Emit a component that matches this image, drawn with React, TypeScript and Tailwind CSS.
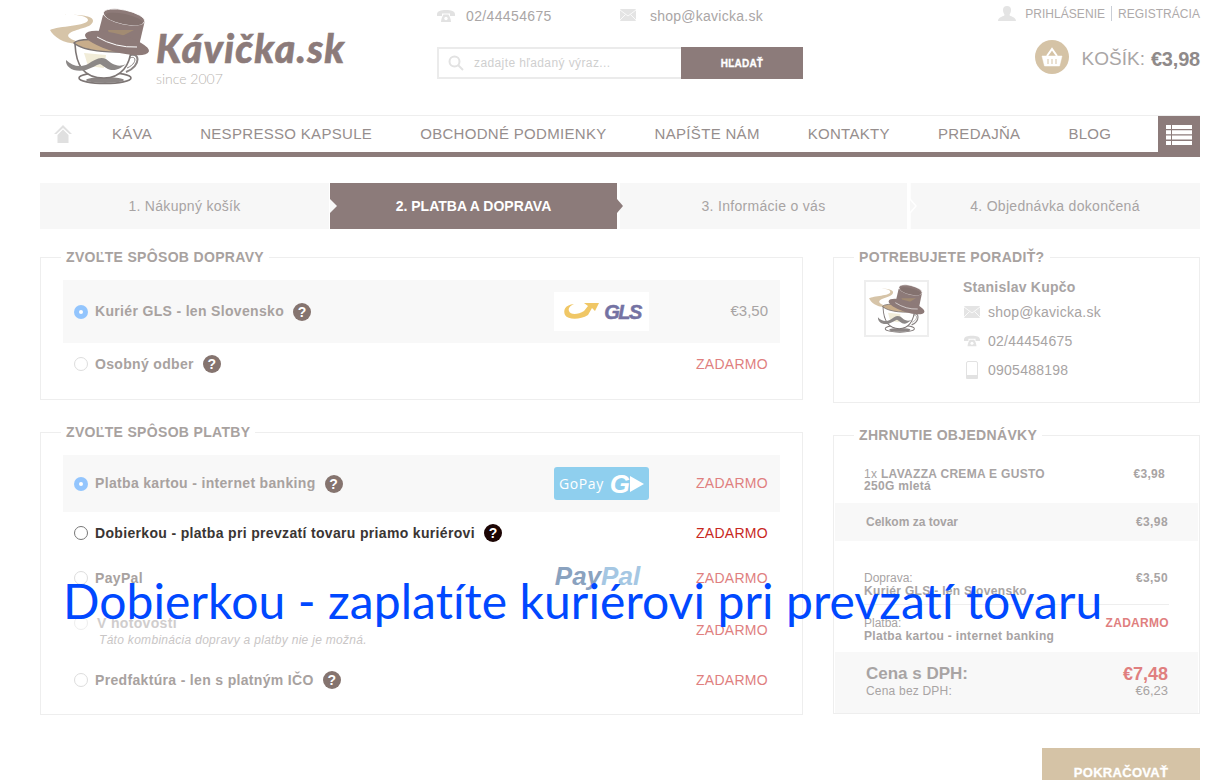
import React from "react";

const sans = "font-['Liberation_Sans',Arial,sans-serif]";

const HatCup: React.FC<{ className?: string; stretch?: boolean }> = ({ className, stretch }) => (
  <svg viewBox="0 0 100 82" className={className} preserveAspectRatio={stretch ? "none" : undefined}>
    {/* steam */}
    <path d="M13 9C22 8 38 9 38 14C38 20 8 20 0 24C4 32 18 40 33 37C24 35 14 31 20 27C28 22 42 22 43 15C44 9 24 8 13 9Z" fill="#d6c4a8" />
    {/* saucer */}
    <ellipse cx="55" cy="72" rx="26" ry="5.5" fill="#fff" stroke="#7d7675" strokeWidth="1.6" />
    <ellipse cx="55" cy="74" rx="19" ry="3" fill="#8b8584" />
    {/* handle */}
    <path d="M78 50C90 44 92 60 76 66" fill="none" stroke="#8b8584" strokeWidth="2" />
    <path d="M80 52C87 49 87 58 77 62" fill="none" stroke="#8b8584" strokeWidth="1" />
    {/* cup */}
    <path d="M25 38C26 60 34 72 54 72C72 72 80 58 81 44Z" fill="#fff" stroke="#7d7675" strokeWidth="1.6" />
    <path d="M24 37C30 30 72 34 82 44C70 48 34 46 24 37Z" fill="#c8ad8b" stroke="#7d7675" strokeWidth="1.4" />
    <path d="M34 47L56 49L54 62L38 60Z" fill="#f1ecd8" />
    {/* moustache */}
    <path d="M16 54C15 61 24 67 36 64C42 62 46 59 50 58C56 61 62 70 76 58C68 62 62 58 56 53C50 50 44 54 38 58C30 62 22 60 16 54Z" fill="#8c8887" />
    {/* hat */}
    <path d="M53 9L47 32L88 44L95 14Z" fill="#8d7a78" />
    <path d="M58 24L84 24L72 30L60 30Z" fill="#a28b72" />
    <ellipse cx="67" cy="37" rx="33" ry="9" transform="rotate(15 67 37)" fill="#8d7a78" />
    <path d="M47 31Q66 42 87 41" fill="none" stroke="#fff" strokeWidth="1" />
    <ellipse cx="74" cy="11" rx="21" ry="7" transform="rotate(12 74 11)" fill="#8d7a78" stroke="#fff" strokeWidth="0.8" />
    <ellipse cx="74" cy="13" rx="19" ry="5" transform="rotate(12 74 13)" fill="#84726f" />
  </svg>
);

const PhoneIcon: React.FC<{ className?: string }> = ({ className }) => (
  <svg viewBox="0 0 18 12" className={className} fill="#e2e2e2">
    <path d="M0 4.5C0 1 4 0 9 0s9 1 9 4.5V6h-5V3.5H5V6H0Z" />
    <path d="M4 12c0-3 1.500-6 2.500-7.500h5C12.500 6 14 9 14 12Z" />
    <circle cx="9" cy="8.500" r="1.700" fill="#fff" />
  </svg>
);

const MailIcon: React.FC<{ className?: string }> = ({ className }) => (
  <svg viewBox="0 0 16 12" className={className}>
    <rect width="16" height="12" rx="1" fill="#e4e4e4" />
    <path d="M0 1l8 6 8-6M0 11l5.500-5.500M16 11l-5.500-5.500" fill="none" stroke="#fff" strokeWidth="0.8" />
  </svg>
);

const Radio: React.FC<{ state?: "on" | "dark" | "off" | "faint" }> = ({ state = "off" }) => {
  if (state === "on") {
    return (
      <span className="flex h-[14px] w-[14px] shrink-0 items-center justify-center rounded-full bg-[#93c5fd]">
        <span className="h-1 w-1 rounded-full bg-white" />
      </span>
    );
  }
  const border =
    state === "dark" ? "border-[#777]" : state === "faint" ? "-mt-[15px] border-[#eee]" : "border-[#ddd]";
  return <span className={`h-[14px] w-[14px] shrink-0 rounded-full border bg-white ${border}`} />;
};

const Help: React.FC<{ dark?: boolean }> = ({ dark }) => (
  <span
    className={`ml-[9px] flex h-[18px] w-[18px] shrink-0 items-center justify-center rounded-full text-[14px] font-bold leading-none text-white ${
      dark ? "bg-[#1c0504]" : "bg-[#85746f]"
    }`}
  >
    ?
  </span>
);

const GlsLogo = () => (
  <div className="flex h-[39px] w-[95px] items-center justify-center bg-white">
    <svg viewBox="0 0 42 20" className="h-[20px] w-[42px]">
      <path d="M12 2C3 3 1 8 3 13C6 18 18 18 26 13L30 6L33 9L37 1L22 1L26 4L22 9C16 13 8 13 7 9C6 6 8 4 12 2Z" fill="#f0c766" />
    </svg>
    <span className="text-[20px] font-bold italic leading-none tracking-[-1.6px] text-[#7472a3] [-webkit-text-stroke:0.5px_#7472a3]">GLS</span>
  </div>
);

const GoPayLogo = () => (
  <div className="flex h-[33px] w-[95px] items-center rounded-[3px] bg-[#8fcfee] pl-[5px] text-white">
    <span className="font-['Open_Sans',sans-serif] text-[14px] leading-none tracking-[0.6px]">GoPay</span>
    <span className="ml-[6px] text-[26px] font-bold italic leading-none">G</span>
    <span className="h-0 w-0 border-y-[8px] border-l-[14px] border-y-transparent border-l-white" />
  </div>
);

const PayPalLogo = () => (
  <div className="-mt-1 whitespace-nowrap pr-2 text-[26px] font-bold italic leading-none">
    <span className="text-[#8aa2bf]">Pay</span>
    <span className="text-[#a5c7e3]">Pal</span>
  </div>
);

type Row = {
  label: string;
  note?: string;
  radio?: "on" | "dark" | "off" | "faint";
  help?: boolean;
  logo?: React.ReactNode;
  price: string;
  height: string;
  tone?: "selected" | "hover" | "muted" | "disabled";
};

const shipping: Row[] = [
  { label: "Kuriér GLS - len Slovensko", radio: "on", help: true, logo: <GlsLogo />, price: "€3,50", height: "h-[63px]", tone: "selected" },
  { label: "Osobný odber", help: true, price: "ZADARMO", height: "h-[42px]" },
];

const payment: Row[] = [
  { label: "Platba kartou - internet banking", radio: "on", help: true, logo: <GoPayLogo />, price: "ZADARMO", height: "h-[57px]", tone: "selected" },
  { label: "Dobierkou - platba pri prevzatí tovaru priamo kuriérovi", radio: "dark", help: true, price: "ZADARMO", height: "h-[42px]", tone: "hover" },
  { label: "PayPal", logo: <PayPalLogo />, price: "ZADARMO", height: "h-[48px]" },
  { label: "V hotovosti", note: "Táto kombinácia dopravy a platby nie je možná.", radio: "faint", price: "ZADARMO", height: "h-[56px]", tone: "disabled" },
  { label: "Predfaktúra - len s platným IČO", help: true, price: "ZADARMO", height: "h-[44px]" },
];

const OptionRow: React.FC<{ row: Row }> = ({ row }) => {
  const isFree = row.price === "ZADARMO";
  const labelColor =
    row.tone === "hover" ? "text-[#3a3533]" : row.tone === "disabled" ? "text-[#d0cdcd]" : "text-[#a8a2a0]";
  const priceColor = row.tone === "hover" ? "text-[#c8281e]" : isFree ? "text-[#e07f7f]" : "text-[#a8a4a4]";
  return (
    <div
      className={`grid grid-cols-[491px_95px_1fr] items-center pr-3 ${row.height} ${
        row.tone === "selected" ? "bg-[#f8f8f8]" : ""
      }`}
    >
      <div className="flex items-center pl-[11px]">
        <Radio state={row.radio} />
        <div className={`whitespace-nowrap ${row.note ? "ml-[9px]" : "ml-[7px]"}`}>
          <div className="flex items-center">
            <span className={`text-[14px] font-bold tracking-[0.33px] ${labelColor}`}>{row.label}</span>
            {row.help && <Help dark={row.tone === "hover"} />}
          </div>
          {row.note && (
            <div className="-mt-[2px] ml-[2px] text-[12px] italic leading-[16px] tracking-[0.3px] text-[#c9c6c6]">{row.note}</div>
          )}
        </div>
      </div>
      <div className="flex justify-center">{row.logo}</div>
      <div className={`text-right ${isFree ? "text-[14px] tracking-[0.3px]" : "text-[15px]"} ${priceColor}`}>{row.price}</div>
    </div>
  );
};

const Panel: React.FC<{ title: string; className?: string; children: React.ReactNode }> = ({
  title,
  className = "",
  children,
}) => (
  <fieldset className={`border border-[#eeeeee] ${className}`}>
    <legend className="ml-5 px-[5px] text-[14px] font-bold leading-[18px] tracking-[0.33px] text-[#a8a2a0]">{title}</legend>
    {children}
  </fieldset>
);

const navItems = ["KÁVA", "NESPRESSO KAPSULE", "OBCHODNÉ PODMIENKY", "NAPÍŠTE NÁM", "KONTAKTY", "PREDAJŇA", "BLOG"];

const Header = () => (
  <header className="flex h-[115px]">
    <div className="w-[397px] shrink-0">
      <div className="ml-[10px] mt-[6px] flex">
        <HatCup className="h-[82px] w-[100px] shrink-0" />
        <div className="ml-[6px] pt-[20px]">
          <div className="font-['Lato',sans-serif] text-[39px] font-black italic leading-[44px] tracking-[1.3px] text-[#8c7b7a] [-webkit-text-stroke:0.6px_#8c7b7a]">
            Kávička.sk
          </div>
          <div className="font-['Lato',sans-serif] text-[14px] font-light leading-[18px] text-[#b9b5b0]">since 2007</div>
        </div>
      </div>
    </div>
    <div className="w-[366px] shrink-0">
      <div className="flex h-[47px] items-start pt-[7px] text-[14px] leading-[18px] text-[#aaa6a6]">
        <PhoneIcon className="mt-[3px] h-[12px] w-[18px]" />
        <span className="ml-[11px] w-[154px] tracking-[0.36px]">02/44454675</span>
        <MailIcon className="mt-[2px] h-[12px] w-[16px]" />
        <span className="ml-[14px] tracking-[0.25px]">shop@kavicka.sk</span>
      </div>
      <div className="flex h-[32px]">
        <div className="flex w-[244px] items-center border-2 border-r-0 border-[#ebebeb] pl-[9px]">
          <svg viewBox="0 0 16 16" className="h-4 w-4" fill="none" stroke="#e2e2e2" strokeWidth="2">
            <circle cx="6.500" cy="6.500" r="5" />
            <path d="M10 10l5 5" />
          </svg>
          <span className="ml-[10px] text-[12px] tracking-[0.4px] text-[#cfcfcf]">zadajte hľadaný výraz...</span>
        </div>
        <div className="flex w-[122px] items-center justify-center bg-[#8c7b7a] text-[10px] font-black tracking-[0.2px] text-white [-webkit-text-stroke:0.3px_#fff]">
          HĽADAŤ
        </div>
      </div>
    </div>
    <div className="flex-1">
      <div className="flex h-[24px] items-center justify-end pt-[3px] text-[12px] tracking-[0.05px] text-[#aeaaaa]">
        <svg viewBox="0 0 18 15" className="h-[15px] w-[18px]" fill="#e4e4e4">
          <path d="M5 4a4 4 0 018 0c0 3-1.500 4-1.500 5 0 1.500 6.500 1.500 6.500 6H0c0-4.500 6.500-4.500 6.500-6C6.500 8 5 7 5 4Z" />
        </svg>
        <span className="ml-[9px]">PRIHLÁSENIE</span>
        <span className="mx-[6px] h-[15px] w-px bg-[#c9ced6]" />
        <span>REGISTRÁCIA</span>
      </div>
      <div className="mt-[16px] flex items-center justify-end">
        <span className="flex h-[34px] w-[34px] items-center justify-center rounded-full bg-[#d5c3a6]">
          <svg viewBox="0 0 22 20" className="h-[20px] w-[22px]" fill="none" stroke="#fff">
            <path d="M6 9l5-7 5 7" strokeWidth="2" />
            <path d="M1 9h20l-2.500 10h-15Z" fill="#fff" strokeWidth="0.500" />
            <path d="M7 12v5M11 12v5M15 12v5" stroke="#d5c3a6" strokeWidth="1" />
          </svg>
        </span>
        <span className="ml-[13px] mt-[4px] text-[19px] leading-6 text-[#aaa6a6]">KOŠÍK:</span>
        <span className="ml-[6px] mt-[4px] text-[20px] font-bold leading-6 tracking-[-0.2px] text-[#8f8a8a]">€3,98</span>
      </div>
    </div>
  </header>
);

const Nav = () => (
  <nav className="flex h-[42px] border-t border-b-[5px] border-t-[#eeeeee] border-b-[#8c7b7a]">
    <div className="flex w-[72px] shrink-0 items-center pl-[14px]">
      <svg viewBox="0 0 18 18" className="h-[18px] w-[18px]" fill="#e0e0e0">
        <path d="M9 0L18 9H15.500L9 3L2.500 9H0Z" />
        <path d="M3.500 10L9 4.500L14.500 10V18H3.500Z" />
      </svg>
    </div>
    <ul className="flex flex-1 items-center gap-12 pb-[2px] text-[15px] leading-none tracking-[0.31px] text-[#968e8d]">
      {navItems.map((item) => (
        <li key={item} className="whitespace-nowrap">
          {item}
        </li>
      ))}
    </ul>
    <div className="flex h-[37px] w-[42px] items-center justify-center bg-[#8c7b7a]">
      <svg viewBox="0 0 26 20" className="h-[20px] w-[26px]" fill="#fff">
        <path d="M0 0h26v4H0zM0 5.300h26v4H0zM0 10.600h26v4H0zM0 16h26v4H0z" />
        <path d="M5 0h1v20H5z" fill="#8c7b7a" />
      </svg>
    </div>
  </nav>
);

const Steps = () => (
  <div className="mt-[26px] flex h-[46px] text-[14px] tracking-[0.3px] text-[#a8a4a4]">
    <div className="flex w-[289px] items-center justify-center bg-[#f7f7f7]">1. Nákupný košík</div>
    <div className="relative ml-px flex w-[287px] items-center justify-center bg-[#8c7b7a] font-bold tracking-normal text-white">
      <span className="absolute left-0 top-[16px] h-0 w-0 border-y-[7px] border-l-[7px] border-y-transparent border-l-[#f7f7f7]" />
      2. PLATBA A DOPRAVA
      <span className="absolute -right-[6px] top-[16px] h-0 w-0 border-y-[7px] border-l-[6px] border-y-transparent border-l-[#8c7b7a]" />
    </div>
    <div className="ml-[3px] flex w-[287px] items-center justify-center bg-[#f7f7f7]">3. Informácie o vás</div>
    <div className="relative ml-[3px] flex flex-1 items-center justify-center bg-[#f7f7f7]">
      <svg viewBox="0 0 8 46" className="absolute left-0 top-0 h-[46px] w-[8px]">
        <path d="M0 0V16L6 23L0 30V46" fill="none" stroke="#fff" strokeWidth="1.500" />
      </svg>
      4. Objednávka dokončená
    </div>
  </div>
);

export default function App() {
  return (
    <div className={`relative h-[780px] overflow-hidden bg-white ${sans}`}>
      <div className="mx-[40px] w-[1160px]">
        <Header />
        <Nav />
        <Steps />
        <div className="mt-[19px] flex items-start">
          <div className="w-[763px] shrink-0">
            <Panel title="ZVOĽTE SPÔSOB DOPRAVY" className="h-[152px]">
              <div className="px-[22px] pt-[14px]">
                {shipping.map((row) => (
                  <OptionRow key={row.label} row={row} />
                ))}
              </div>
            </Panel>
            <Panel title="ZVOĽTE SPÔSOB PLATBY" className="mt-[23px] h-[292px]">
              <div className="px-[22px] pt-[14px]">
                {payment.map((row) => (
                  <OptionRow key={row.label} row={row} />
                ))}
              </div>
            </Panel>
          </div>
          <div className="ml-[30px] flex-1">
            <Panel title="POTREBUJETE PORADIŤ?" className="h-[155px]">
              <div className="flex pl-[30px] pt-[14px]">
                <div className="flex h-[57px] w-[65px] shrink-0 items-center justify-center border-2 border-[#eeeeee]">
                  <HatCup stretch className="h-[52px] w-[56px]" />
                </div>
                <div className="ml-[34px] -mt-[3px] text-[14px] tracking-[0.25px] text-[#a8a4a4]">
                  <div className="h-[20px] font-bold leading-[20px]">Stanislav Kupčo</div>
                  <div className="mt-[5px] flex h-[20px] items-center">
                    <MailIcon className="ml-px h-[12px] w-[16px]" />
                    <span className="ml-[8px]">shop@kavicka.sk</span>
                  </div>
                  <div className="mt-[9px] flex h-[20px] items-center">
                    <PhoneIcon className="ml-px h-[12px] w-[16px]" />
                    <span className="ml-[8px]">02/44454675</span>
                  </div>
                  <div className="mt-[9px] flex h-[20px] items-center">
                    <svg viewBox="0 0 12 18" className="ml-[3px] h-[18px] w-[12px]">
                      <rect x="0.500" y="0.500" width="11" height="17" rx="1.500" fill="#fff" stroke="#e2e2e2" />
                      <rect x="0" y="14" width="12" height="4" rx="1" fill="#e2e2e2" />
                    </svg>
                    <span className="ml-[10px]">0905488198</span>
                  </div>
                </div>
              </div>
            </Panel>
            <Panel title="ZHRNUTIE OBJEDNÁVKY" className="mt-[23px] h-[288px]">
              <div className="flex items-start justify-between pl-[30px] pr-[34px] pt-[24px] text-[12px] font-bold leading-[12px] tracking-[0.3px] text-[#a8a4a4]">
                <div>
                  <span className="font-normal">1x </span>LAVAZZA CREMA E GUSTO
                  <br />
                  250G mletá
                </div>
                <span>€3,98</span>
              </div>
              <div className="mx-px mt-[11px] flex h-[38px] items-center justify-between bg-[#f8f8f8] pl-[31px] pr-[30px] text-[12px] font-bold text-[#a8a4a4]">
                <span>Celkom za tovar</span>
                <span className="tracking-[0.4px]">€3,98</span>
              </div>
              <div className="mx-[30px] mt-[31px] flex h-[33px] justify-between border-b border-[#eeeeee] pr-[1px] text-[12px] leading-[13px] text-[#a8a4a4]">
                <div>
                  Doprava:
                  <br />
                  <span className="font-bold tracking-[0.32px]">Kuriér GLS - len Slovensko</span>
                </div>
                <span className="font-bold tracking-[0.4px]">€3,50</span>
              </div>
              <div className="mx-[30px] mt-[12px] flex h-[35px] justify-between text-[12px] leading-[13px] text-[#a8a4a4]">
                <div>
                  Platba:
                  <br />
                  <span className="font-bold tracking-[0.32px]">Platba kartou - internet banking</span>
                </div>
                <span className="font-bold tracking-[0.3px] text-[#e07f7f]">ZADARMO</span>
              </div>
              <div className="mx-px flex h-[61px] justify-between bg-[#f8f8f8] pl-[31px] pr-[30px] pt-[12px] text-[#a8a4a4]">
                <div>
                  <div className="text-[17px] font-bold leading-[20px]">Cena s DPH:</div>
                  <div className="text-[12px] leading-[15px] tracking-[0.2px]">Cena bez DPH:</div>
                </div>
                <div className="text-right">
                  <div className="text-[18px] font-bold leading-[20px] text-[#e07f7f]">€7,48</div>
                  <div className="text-[13px] leading-[13px]">€6,23</div>
                </div>
              </div>
            </Panel>
          </div>
        </div>
        <div className="mt-[33px] flex justify-end">
          <div className="flex h-[50px] w-[158px] items-center justify-center bg-[#d5c3a6] text-[13px] font-black tracking-[0.3px] text-white [-webkit-text-stroke:0.3px_#fff]">
            POKRAČOVAŤ
          </div>
        </div>
      </div>
      <div className="absolute left-[63px] top-[572px] whitespace-nowrap font-['Lato',sans-serif] text-[48px] leading-[58px] tracking-[0.08px] text-[#0048ff]">
        Dobierkou - zaplatíte kuriérovi pri prevzatí tovaru
      </div>
    </div>
  );
}
